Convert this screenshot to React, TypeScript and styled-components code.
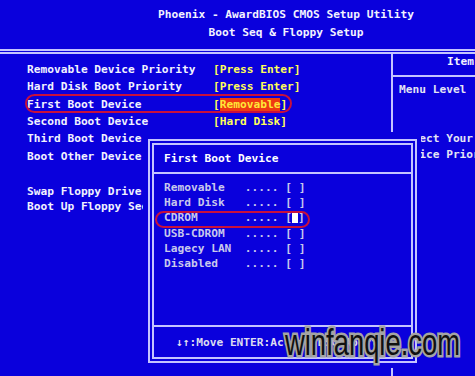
import React from "react";
import styled, { createGlobalStyle } from "styled-components";

// Types
interface RowProps {
  height?: number;
}

interface OptionProps {
  name: string;
  selected?: boolean;
}

interface MarkProps {
  left: number;
  top: number;
  width: number;
  height: number;
}

// Palette
const BLUE = "#0a00dc";
const LINE = "#c4c4ff";
const WHITE = "#f2f2ff";
const YELLOW = "#ffff58";

const GlobalStyle = createGlobalStyle`
  html, body {
    margin: 0;
    padding: 0;
    background: ${BLUE};
  }
`;

// Styled Components
const Screen = styled.div`
  position: relative;
  width: 475px;
  height: 376px;
  overflow: hidden;
  background: ${BLUE};
  color: ${WHITE};
  font-family: "DejaVu Sans Mono", "Liberation Mono", monospace;
  font-weight: bold;
  font-size: 11.2px;
  white-space: pre;
  display: flex;
  flex-direction: column;
`;

const TitleBar = styled.header`
  height: 49px;
  box-sizing: border-box;
  padding: 6px 0 0 97px;
  text-align: center;
  line-height: 18px;
`;

const DoubleRule = styled.div`
  height: 1px;
  border-top: 2px solid ${LINE};
  border-bottom: 2px solid ${LINE};
`;

const Body = styled.main`
  flex: 1;
  display: grid;
  grid-template-columns: 393px 1fr;
`;

const Settings = styled.section`
  border-right: 2px solid ${LINE};
  padding: 7px 0 0 27px;
`;

const Row = styled.div<RowProps>`
  display: flex;
  align-items: center;
  height: ${(p) => p.height ?? 17.3}px;
`;

const Spacer = styled.div`
  height: 18.7px;
`;

const Label = styled.span`
  width: 186px;
  flex-shrink: 0;
`;

const Value = styled.span`
  color: ${YELLOW};
`;

const Highlight = styled.span`
  background: #ee3a12;
  color: #ffe838;
`;

const HelpPane = styled.aside`
  overflow: hidden;
`;

const HelpHeader = styled.div`
  height: 23px;
  box-sizing: border-box;
  line-height: 16px;
  padding-left: 54px;
  border-bottom: 2px solid ${LINE};
`;

const HelpText = styled.div`
  padding: 5px 0 0 6px;
  line-height: 16.3px;
  color: #e4e4f4;
`;

const Popup = styled.div`
  position: absolute;
  left: 143px;
  top: 132px;
  width: 278px;
  height: 236px;
  box-sizing: border-box;
  padding: 7px 4px 5px 5px;
  background: ${BLUE};
`;

const Frame = styled.div`
  height: 100%;
  box-sizing: border-box;
  border: 6px double ${LINE};
  display: flex;
  flex-direction: column;
`;

const PopupTitle = styled.div`
  height: 27px;
  line-height: 27px;
  padding-left: 10px;
  border-bottom: 2px solid ${LINE};
  color: #ffffff;
`;

const OptionList = styled.div`
  flex: 1;
  padding: 6px 0 0 10px;
  color: #c8c8ec;
`;

const OptionRow = styled.div`
  display: flex;
  height: 15.2px;
  line-height: 15.2px;
`;

const OptionName = styled.span`
  width: 12ch;
`;

const Cursor = styled.span`
  display: inline-block;
  width: 6px;
  height: 10px;
  background: #ffffff;
  align-self: center;
`;

const PopupFooter = styled.div`
  height: 28px;
  line-height: 28px;
  padding: 2px 0 0 22px;
  box-sizing: content-box;
  border-top: 2px solid ${LINE};
  color: #dcdcf0;
`;

const Mark = styled.span<MarkProps>`
  position: absolute;
  left: ${(p) => p.left}px;
  top: ${(p) => p.top}px;
  width: ${(p) => p.width}px;
  height: ${(p) => p.height}px;
  box-sizing: border-box;
  border: 2px solid #c8103c;
  border-radius: ${(p) => p.height / 2}px;
`;

const Watermark = styled.div`
  position: absolute;
  left: 285px;
  top: 324px;
  font-family: "Liberation Sans", Arial, sans-serif;
  font-weight: normal;
  font-size: 37px;
  line-height: 1;
  color: #101010;
  -webkit-text-stroke: 5px #a4a4a4;
  paint-order: stroke fill;
  transform: scaleX(0.74);
  transform-origin: left top;
`;

// Sub-components
const Option = ({ name, selected }: OptionProps) => (
  <OptionRow>
    <OptionName>{name}</OptionName>
    <span>{"..... ["}</span>
    {selected ? <Cursor /> : <span> </span>}
    <span>]</span>
  </OptionRow>
);

const options = ["Removable", "Hard Disk", "CDROM", "USB-CDROM", "Lagecy LAN", "Disabled"];

// Component
const App = () => {
  return (
    <>
      <GlobalStyle />
      <Screen>
        <TitleBar>
          <div>Phoenix - AwardBIOS CMOS Setup Utility</div>
          <div>Boot Seq &amp; Floppy Setup</div>
        </TitleBar>
        <DoubleRule />
        <Body>
          <Settings>
            <Row>
              <Label>Removable Device Priority</Label>
              <Value>[Press Enter]</Value>
            </Row>
            <Row>
              <Label>Hard Disk Boot Priority</Label>
              <Value>[Press Enter]</Value>
            </Row>
            <Row>
              <Label>First Boot Device</Label>
              <Value>
                [<Highlight>Removable</Highlight>]
              </Value>
            </Row>
            <Row>
              <Label>Second Boot Device</Label>
              <Value>[Hard Disk]</Value>
            </Row>
            <Row>
              <Label>Third Boot Device</Label>
            </Row>
            <Row>
              <Label>Boot Other Device</Label>
            </Row>
            <Spacer />
            <Row height={15.5}>
              <Label>Swap Floppy Drive</Label>
            </Row>
            <Row height={15.5}>
              <Label>Boot Up Floppy Seek</Label>
            </Row>
          </Settings>
          <HelpPane>
            <HelpHeader>Item Help</HelpHeader>
            <HelpText>
              <div>Menu Level   ►</div>
              <div> </div>
              <div> </div>
              <div>Select Your Boot</div>
              <div>Device Priority</div>
            </HelpText>
          </HelpPane>
        </Body>

        <Mark left={25} top={94} width={267} height={19} />

        <Popup>
          <Frame>
            <PopupTitle>First Boot Device</PopupTitle>
            <OptionList>
              {options.map((o) => (
                <Option key={o} name={o} selected={o === "CDROM"} />
              ))}
            </OptionList>
            <PopupFooter>↓↑:Move ENTER:Accept ESC:Abort</PopupFooter>
          </Frame>
        </Popup>

        <Mark left={155} top={211} width={155} height={17} />

        <Watermark>winfanqie.com</Watermark>
      </Screen>
    </>
  );
};

export default App;
